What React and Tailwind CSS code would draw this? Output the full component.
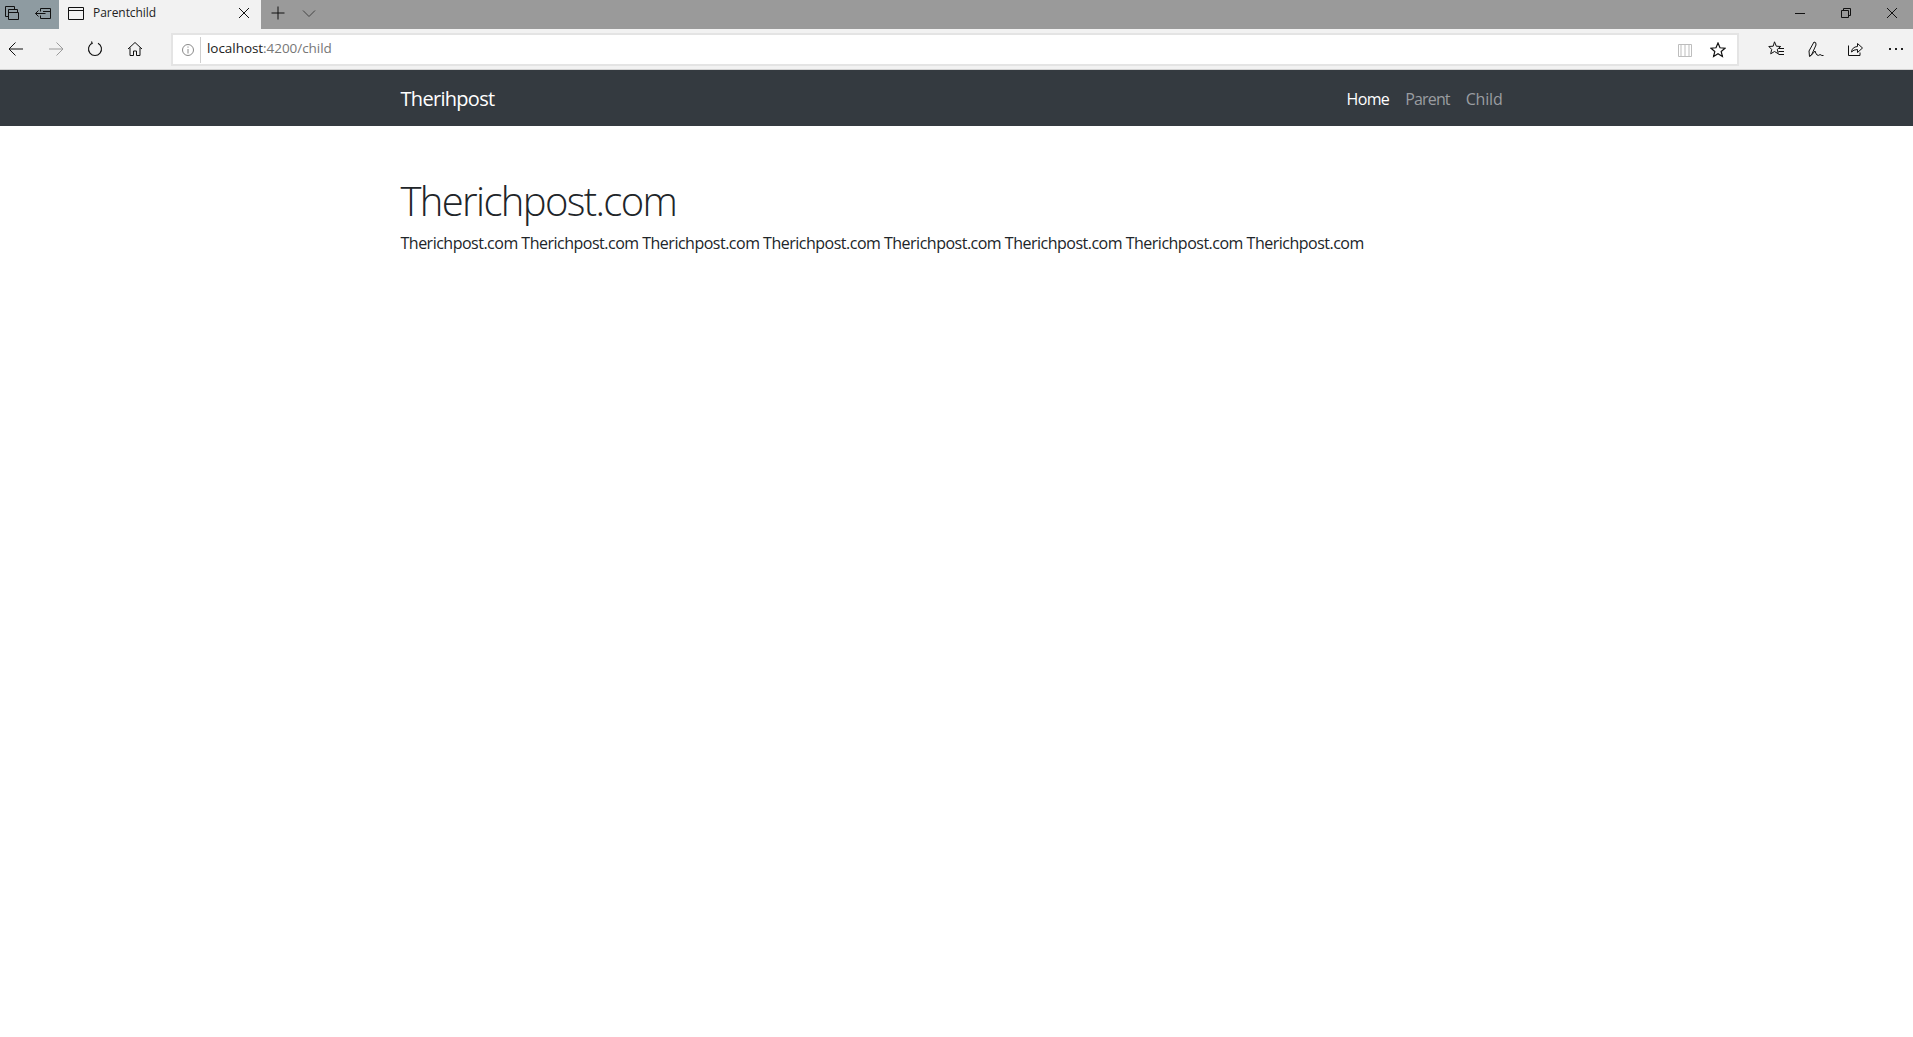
import React from "react";

const Ico = ({ w = 16, h = 16, children, className = "" }) => (
  <svg width={w} height={h} viewBox={`0 0 ${w} ${h}`} fill="none" stroke="currentColor" strokeWidth="1" className={`shrink-0 ${className}`}>
    {children}
  </svg>
);

const TitleBar = () => (
  <div className="flex h-[29px] bg-[#9a9a9a] text-[#111]">
    <div className="flex w-[59px] items-center bg-[#8e9ba1] pb-[4px]">
      <div className="flex w-[20px] justify-end">
        <Ico>
          <path d="M1.500 1.500h9v3M1.500 1.500v10h3M4.500 4.500h9v3M4.500 4.500v10h10v-7h-10" />
        </Ico>
      </div>
      <div className="ml-[15px] flex">
        <Ico>
          <path d="M5.500 3.500h10v10h-10v-3M5.500 6.500v-3M.5 8.500h10M3.500 5.500l-3 3 3 3M8 6.500h7" />
        </Ico>
      </div>
    </div>
    <div className="flex w-[202px] items-center bg-[#f2f2f2] pb-[4px] pl-[9px]">
      <Ico>
        <path d="M.5 2.500h15v12h-15zM.5 5.500h15" />
      </Ico>
      <span className="ml-[9px] font-['Open_Sans',sans-serif] text-[12px] tracking-[-0.05px] text-[#222]">Parentchild</span>
      <Ico w={12} h={12} className="ml-auto mr-[11px]">
        <path d="M1 1l10 10M11 1L1 11" />
      </Ico>
    </div>
    <div className="ml-[10px] flex items-center pb-[4px]">
      <Ico w={14} h={14}>
        <path d="M7 .5v13M.5 7h13" />
      </Ico>
      <Ico w={14} h={14} className="ml-[17px] text-[#444]">
        <path d="M1 4.500l6 6 6-6" />
      </Ico>
    </div>
    <div className="ml-auto flex items-center pb-[4px]">
      <Ico w={12} h={12} className="mr-[34px]">
        <path d="M1 6.500h10" />
      </Ico>
      <Ico w={12} h={12} className="mr-[34px]">
        <path d="M1.500 3.500h7v7h-7zM3.500 3.500v-2h7v7h-2" />
      </Ico>
      <Ico w={12} h={12} className="mr-[15px]">
        <path d="M1 1l10 10M11 1L1 11" />
      </Ico>
    </div>
  </div>
);

const Toolbar = () => (
  <div className="flex h-[41px] items-start border-b border-[#d2d2d2] bg-[#f2f2f2] pt-[4px] text-[#111]">
    <div className="flex h-[32px] w-[171px] items-center pl-[8px]">
      <Ico>
        <path d="M15 8H1M7.500 1.500L1 8l6.500 6.500" />
      </Ico>
      <Ico className="ml-[24px] text-[#9a9a9a]">
        <path d="M1 8h14M8.500 1.500L15 8l-6.500 6.500" />
      </Ico>
      <Ico className="ml-[23px]">
        <path d="M5 2.200A6.500 6.500 0 1 0 11 2.200M4.500 .5L5.200 2.500 3 3.400" strokeWidth="1.100" />
      </Ico>
      <Ico className="ml-[24px]">
        <path d="M1 8l7-6.500L15 8M3 6.500v8h3.500v-4.500h3v4.500H13v-8" />
      </Ico>
    </div>
    <div className="flex h-[33px] w-[1568px] items-center border-2 border-[#e4e4e4] bg-white">
      <Ico w={14} h={14} className="ml-[8px] text-[#8a8a8a]">
        <circle cx="7" cy="7" r="5.500" />
        <path d="M7 6v4.500M7 3.500v1.200" />
      </Ico>
      <div className="ml-[5px] h-[26px] w-px bg-[#cfcfcf]" />
      <span className="mb-[2px] ml-[6px] font-['Open_Sans',sans-serif] text-[13.5px] tracking-[-0.05px] text-[#222]">
        localhost<span className="text-[#777]">:4200/child</span>
      </span>
      <Ico className="ml-auto mr-[2px] text-[#bdbdbd]">
        <path d="M1.500 2.500h13v12h-13zM8 2.500v12M4 2.500v12M12 2.500v12" />
      </Ico>
      <Ico className="ml-[15px] mr-[11px]">
        <path d="M8 1l2 4.800 5 .4-3.800 3.300 1.200 5L8 11.800l-4.400 2.700 1.200-5L1 6.200l5-.4z" strokeWidth="1.200" />
      </Ico>
    </div>
    <div className="flex h-[32px] flex-1 items-center pl-[29px]">
      <Ico>
        <path d="M6.500 .8l1.800 4.400 4.400.3-3.400 2.900 1 4.400-3.800-2.300-3.800 2.300 1-4.400L.8 5.500l4.400-.3zM11 7.500h5M10.500 10.500h5.500M10.500 13.500h5.500" />
      </Ico>
      <Ico className="ml-[24px]">
        <path d="M1.500 15.500L1 10 6 1q2.500 0 2 3L3.500 14zM2 15q3-2 5-5 .5 2 2 4 2 1 3-.5 2 1.500 3.500 1" />
      </Ico>
      <Ico className="ml-[23px]">
        <path d="M1.500 4.500v10h11.500v-3M4.500 11q.5-5 6-5.500V2.500l5 4.500-5 4.500V8.500q-4 0-6 2.500z" />
      </Ico>
      <div className="ml-[26px] flex gap-[4px]">
        <div className="h-[2px] w-[2px] bg-[#222]" />
        <div className="h-[2px] w-[2px] bg-[#222]" />
        <div className="h-[2px] w-[2px] bg-[#222]" />
      </div>
    </div>
  </div>
);

const Navbar = () => (
  <nav className="h-[56px] bg-[#343a40]">
    <div className="mx-auto flex h-full w-[1140px] items-center px-[14px] pt-[2px]">
      <a className="text-[20px] tracking-[-0.7px] text-white">Therihpost</a>
      <ul className="ml-auto flex gap-[16px] pr-[10px] text-[16px]">
        <li className="tracking-[-0.6px] text-white">Home</li>
        <li className="tracking-[-0.85px] text-[#9a9da0]">Parent</li>
        <li className="tracking-[-0.2px] text-[#9a9da0]">Child</li>
      </ul>
    </div>
  </nav>
);

export default function App() {
  const words = Array(8).fill("Therichpost.com").join(" ");
  return (
    <div className="h-[1037px] overflow-hidden bg-white font-['Open_Sans',sans-serif]">
      <TitleBar />
      <Toolbar />
      <Navbar />
      <main className="mx-auto w-[1140px] px-[14px] pt-[51px] text-[#212529]">
        <h1 className="mb-[6px] text-[40px] font-light leading-[48px] tracking-[-1.65px]">Therichpost.com</h1>
        <p className="text-[16px] leading-[24px] tracking-[-0.5px]">{words}</p>
      </main>
    </div>
  );
}
